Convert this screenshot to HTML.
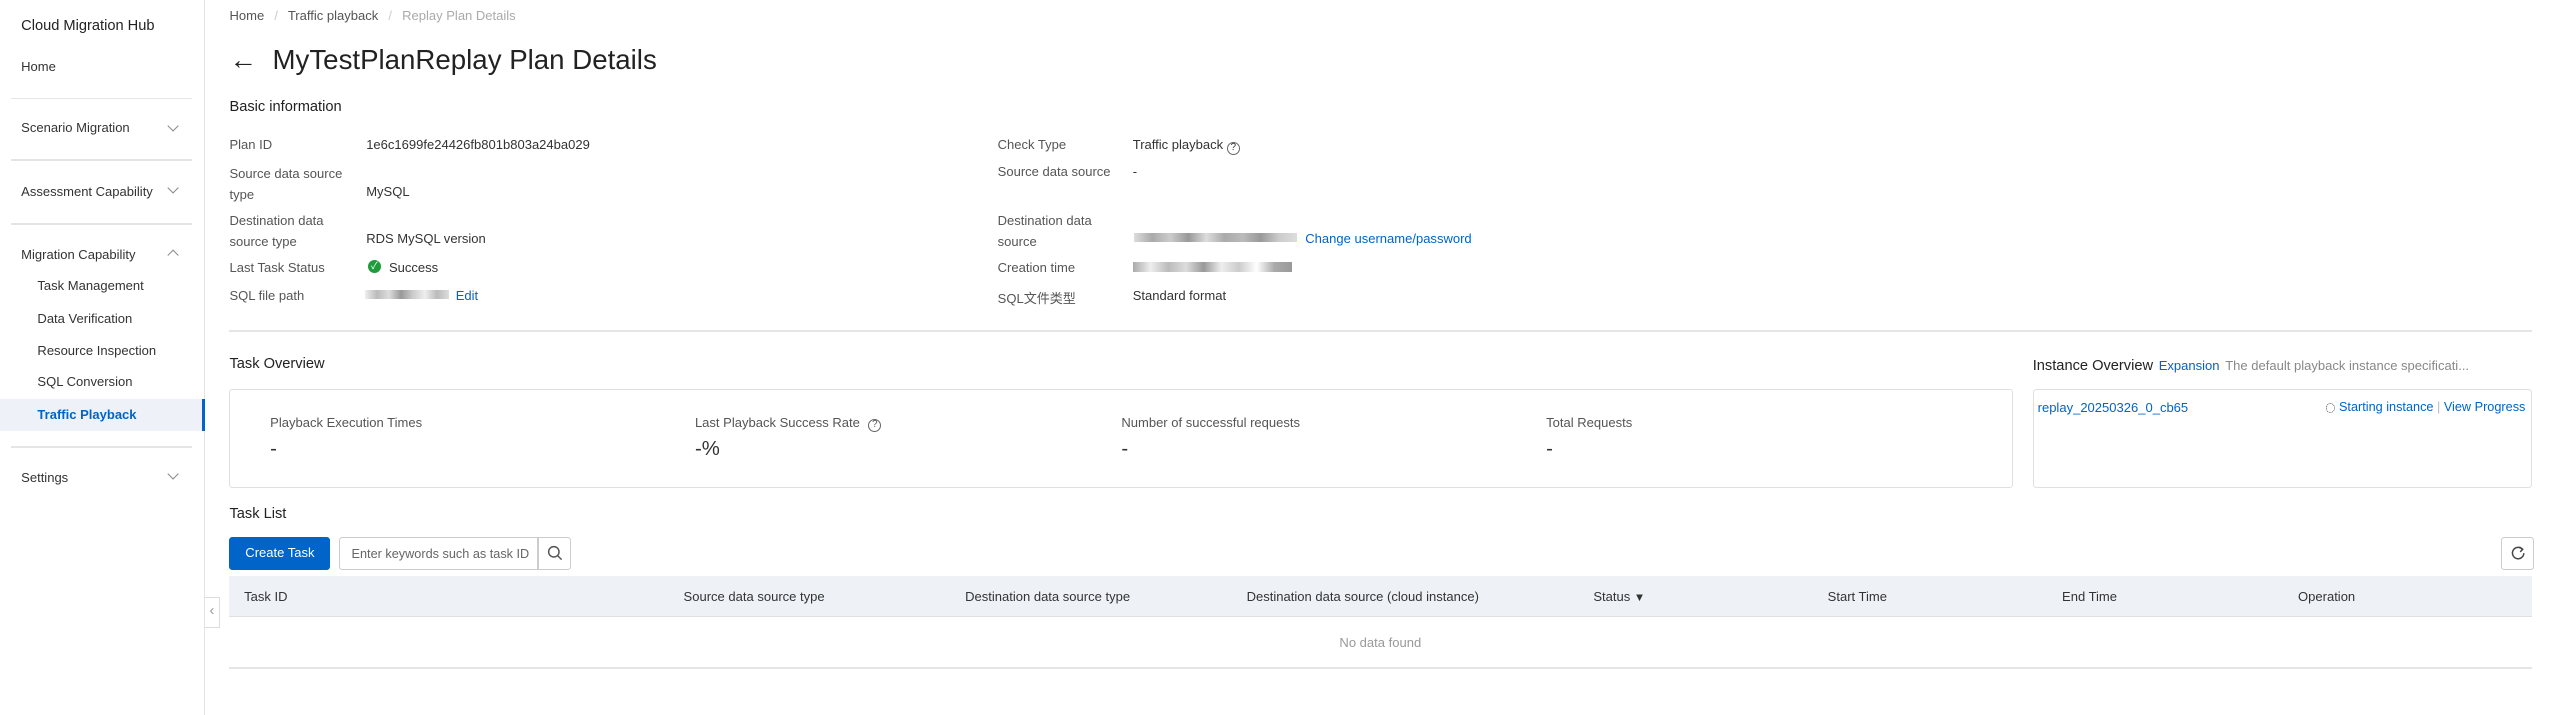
<!DOCTYPE html>
<html><head><meta charset="utf-8"><style>
*{box-sizing:border-box;margin:0;padding:0}
html,body{width:2552px;height:715px;overflow:hidden;background:#fff}
#z{zoom:1.6275;width:1568px;height:440px;position:relative;font-family:"Liberation Sans","Noto Sans CJK SC",sans-serif;font-size:8px;color:#333}
.a{position:absolute;white-space:nowrap}
.side{position:absolute;left:0;top:0;width:126px;height:440px;border-right:1px solid #e3e3e3;background:#fff}
.hr{position:absolute;left:7px;width:111px;height:1px;background:#e5e5e5}
.chev{position:absolute;left:104px;width:5px;height:5px;border-right:1px solid #888;border-bottom:1px solid #888;transform:rotate(45deg)}
.up{transform:rotate(-135deg)}
.lbl{color:#555}
.blue{color:#0064c8}
.box{position:absolute;border:1px solid #e0e0e0;border-radius:2px}
.th{color:#333}
</style></head><body><div id="z">
<div class="side">
<div class="a" style="left:13px;top:11px;font-size:9px;color:#222">Cloud Migration Hub</div>
<div class="a" style="left:13px;top:36px">Home</div>
<div class="hr" style="top:60px"></div>
<div class="a" style="left:13px;top:74px">Scenario Migration</div><div class="chev" style="top:75px"></div>
<div class="hr" style="top:98px"></div>
<div class="a" style="left:13px;top:113px">Assessment Capability</div><div class="chev" style="top:113px"></div>
<div class="hr" style="top:137px"></div>
<div class="a" style="left:13px;top:152px">Migration Capability</div><div class="chev up" style="top:154px"></div>
<div class="a" style="left:23px;top:171px">Task Management</div>
<div class="a" style="left:23px;top:191px">Data Verification</div>
<div class="a" style="left:23px;top:211px">Resource Inspection</div>
<div class="a" style="left:23px;top:230px">SQL Conversion</div>
<div style="position:absolute;left:0;top:245px;width:126px;height:20px;background:#eef1f7;border-right:2px solid #0064c8"></div>
<div class="a blue" style="left:23px;top:250px;font-weight:bold">Traffic Playback</div>
<div class="hr" style="top:274px"></div>
<div class="a" style="left:13px;top:289px">Settings</div><div class="chev" style="top:289px"></div>
</div>
<div style="position:absolute;left:126px;top:367px;width:9px;height:19px;border:1px solid #ddd;border-left:none;background:#fff;color:#999;font-size:9px;line-height:17px;text-align:center">‹</div>

<div class="a" style="left:141px;top:5px;color:#555">Home <span style="color:#ccc;margin:0 4px">/</span> Traffic playback <span style="color:#ccc;margin:0 4px">/</span> <span style="color:#aaa">Replay Plan Details</span></div>
<div class="a" style="left:141px;top:27px;font-size:17px;color:#222">&#8592;&nbsp; MyTestPlanReplay Plan Details</div>
<div class="a" style="left:141px;top:61px;font-size:9px;color:#222">Basic information</div>

<div class="a lbl" style="left:141px;top:84px">Plan ID</div><div class="a" style="left:225px;top:84px">1e6c1699fe24426fb801b803a24ba029</div>
<div class="a lbl" style="left:141px;top:100px;line-height:13px">Source data source<br>type</div><div class="a" style="left:225px;top:113px">MySQL</div>
<div class="a lbl" style="left:141px;top:129px;line-height:13px">Destination data<br>source type</div><div class="a" style="left:225px;top:142px">RDS MySQL version</div>
<div class="a lbl" style="left:141px;top:160px">Last Task Status</div>
<div class="a" style="left:226px;top:160px;width:8px;height:8px;border-radius:50%;background:#1e9c3a;color:#fff;font-size:6px;line-height:8px;text-align:center">✓</div>
<div class="a" style="left:239px;top:160px">Success</div>
<div class="a lbl" style="left:141px;top:177px">SQL file path</div>
<div class="a" style="left:224px;top:178px;width:52px;height:6px;background:linear-gradient(90deg,#eee,#bbb,#ddd,#999,#ccc,#eee,#bbb,#ddd)"></div>
<div class="a blue" style="left:280px;top:177px">Edit</div>

<div class="a lbl" style="left:613px;top:84px">Check Type</div><div class="a" style="left:696px;top:84px">Traffic playback <span style="display:inline-block;width:8px;height:8px;border:1px solid #666;border-radius:50%;font-size:6px;line-height:6px;text-align:center;vertical-align:-1px">?</span></div>
<div class="a lbl" style="left:613px;top:101px">Source data source</div><div class="a" style="left:696px;top:101px">-</div>
<div class="a lbl" style="left:613px;top:129px;line-height:13px">Destination data<br>source</div>
<div class="a" style="left:697px;top:143px;width:100px;height:6px;background:linear-gradient(90deg,#ddd,#aaa,#ccc,#999,#ddd,#aaa,#bbb,#999,#ccc,#ddd)"></div>
<div class="a blue" style="left:802px;top:142px">Change username/password</div>
<div class="a lbl" style="left:613px;top:160px">Creation time</div>
<div class="a" style="left:696px;top:161px;width:98px;height:6px;background:linear-gradient(90deg,#aaa,#eee,#bbb,#ddd,#999,#eee,#ccc,#fff,#aaa,#999)"></div>
<div class="a lbl" style="left:613px;top:177px">SQL文件类型</div><div class="a" style="left:696px;top:177px">Standard format</div>

<div style="position:absolute;left:141px;top:203px;width:1415px;height:1px;background:#e5e5e5"></div>

<div class="a" style="left:141px;top:219px;font-size:9px;color:#222">Task Overview</div>
<div class="box" style="left:141px;top:239px;width:1096px;height:61px"></div>
<div class="a lbl" style="left:166px;top:255px">Playback Execution Times</div><div class="a" style="left:166px;top:269px;font-size:12.5px">-</div>
<div class="a lbl" style="left:427px;top:255px">Last Playback Success Rate <span style="display:inline-block;width:8px;height:8px;border:1px solid #666;border-radius:50%;font-size:6px;line-height:6px;text-align:center;margin-left:3px">?</span></div><div class="a" style="left:427px;top:269px;font-size:12.5px">-%</div>
<div class="a lbl" style="left:689px;top:255px">Number of successful requests</div><div class="a" style="left:689px;top:269px;font-size:12.5px">-</div>
<div class="a lbl" style="left:950px;top:255px">Total Requests</div><div class="a" style="left:950px;top:269px;font-size:12.5px">-</div>

<div class="a" style="left:1249px;top:220px;font-size:9px;color:#222">Instance Overview <span class="blue" style="font-size:8px;margin-left:1px">Expansion</span> <span style="color:#888;font-size:8px;margin-left:1px">The default playback instance specificati...</span></div>
<div class="box" style="left:1249px;top:239px;width:307px;height:61px"></div>
<div class="a blue" style="left:1252px;top:246px">replay_20250326_0_cb65</div>
<div class="a blue" style="left:1429px;top:246px;font-size:7.8px"><span style="display:inline-block;width:6px;height:6px;border:1px dotted #555;border-radius:50%;vertical-align:-1px"></span> Starting instance <span style="color:#bbb">|</span> View Progress</div>

<div class="a" style="left:141px;top:311px;font-size:9px;color:#222">Task List</div>
<div class="a" style="left:141px;top:330px;width:62px;height:20px;background:#0064c8;border-radius:2px;color:#fff;line-height:20px;text-align:center">Create Task</div>
<div class="a" style="left:208px;top:330px;width:143px;height:20px;border:1px solid #ccc;border-radius:2px"></div>
<div class="a" style="left:216px;top:336px;color:#666;font-size:7.8px">Enter keywords such as task ID</div>
<div class="a" style="left:330px;top:330px;width:1px;height:20px;background:#ccc"></div>
<svg class="a" style="left:336px;top:335px" width="10" height="10" viewBox="0 0 10 10"><circle cx="4.2" cy="4.2" r="3.2" fill="none" stroke="#555" stroke-width="0.9"/><path d="M6.6 6.6L9 9" stroke="#555" stroke-width="0.9"/></svg>
<div class="a" style="left:1537px;top:330px;width:20px;height:20px;border:1px solid #ccc;border-radius:2px"></div>
<svg class="a" style="left:1542px;top:335px" width="10" height="10" viewBox="0 0 10 10"><path d="M7.5 2.5A3.5 3.5 0 1 0 8.5 5" fill="none" stroke="#444" stroke-width="0.9"/><path d="M5.8 1.2L7.8 2.6 6.3 4.2" fill="none" stroke="#444" stroke-width="0.9"/></svg>

<div class="a" style="left:141px;top:354px;width:1415px;height:25px;background:#eef1f6;border-bottom:1px solid #e0e0e0"></div>
<div class="a th" style="left:150px;top:362px">Task ID</div>
<div class="a th" style="left:420px;top:362px">Source data source type</div>
<div class="a th" style="left:593px;top:362px">Destination data source type</div>
<div class="a th" style="left:766px;top:362px">Destination data source (cloud instance)</div>
<div class="a th" style="left:979px;top:362px">Status <span style="font-size:7px">▼</span></div>
<div class="a th" style="left:1123px;top:362px">Start Time</div>
<div class="a th" style="left:1267px;top:362px">End Time</div>
<div class="a th" style="left:1412px;top:362px">Operation</div>
<div class="a" style="left:141px;top:410px;width:1415px;height:1px;background:#e5e5e5"></div>
<div class="a" style="left:823px;top:390px;color:#999">No data found</div>
</div></body></html>
